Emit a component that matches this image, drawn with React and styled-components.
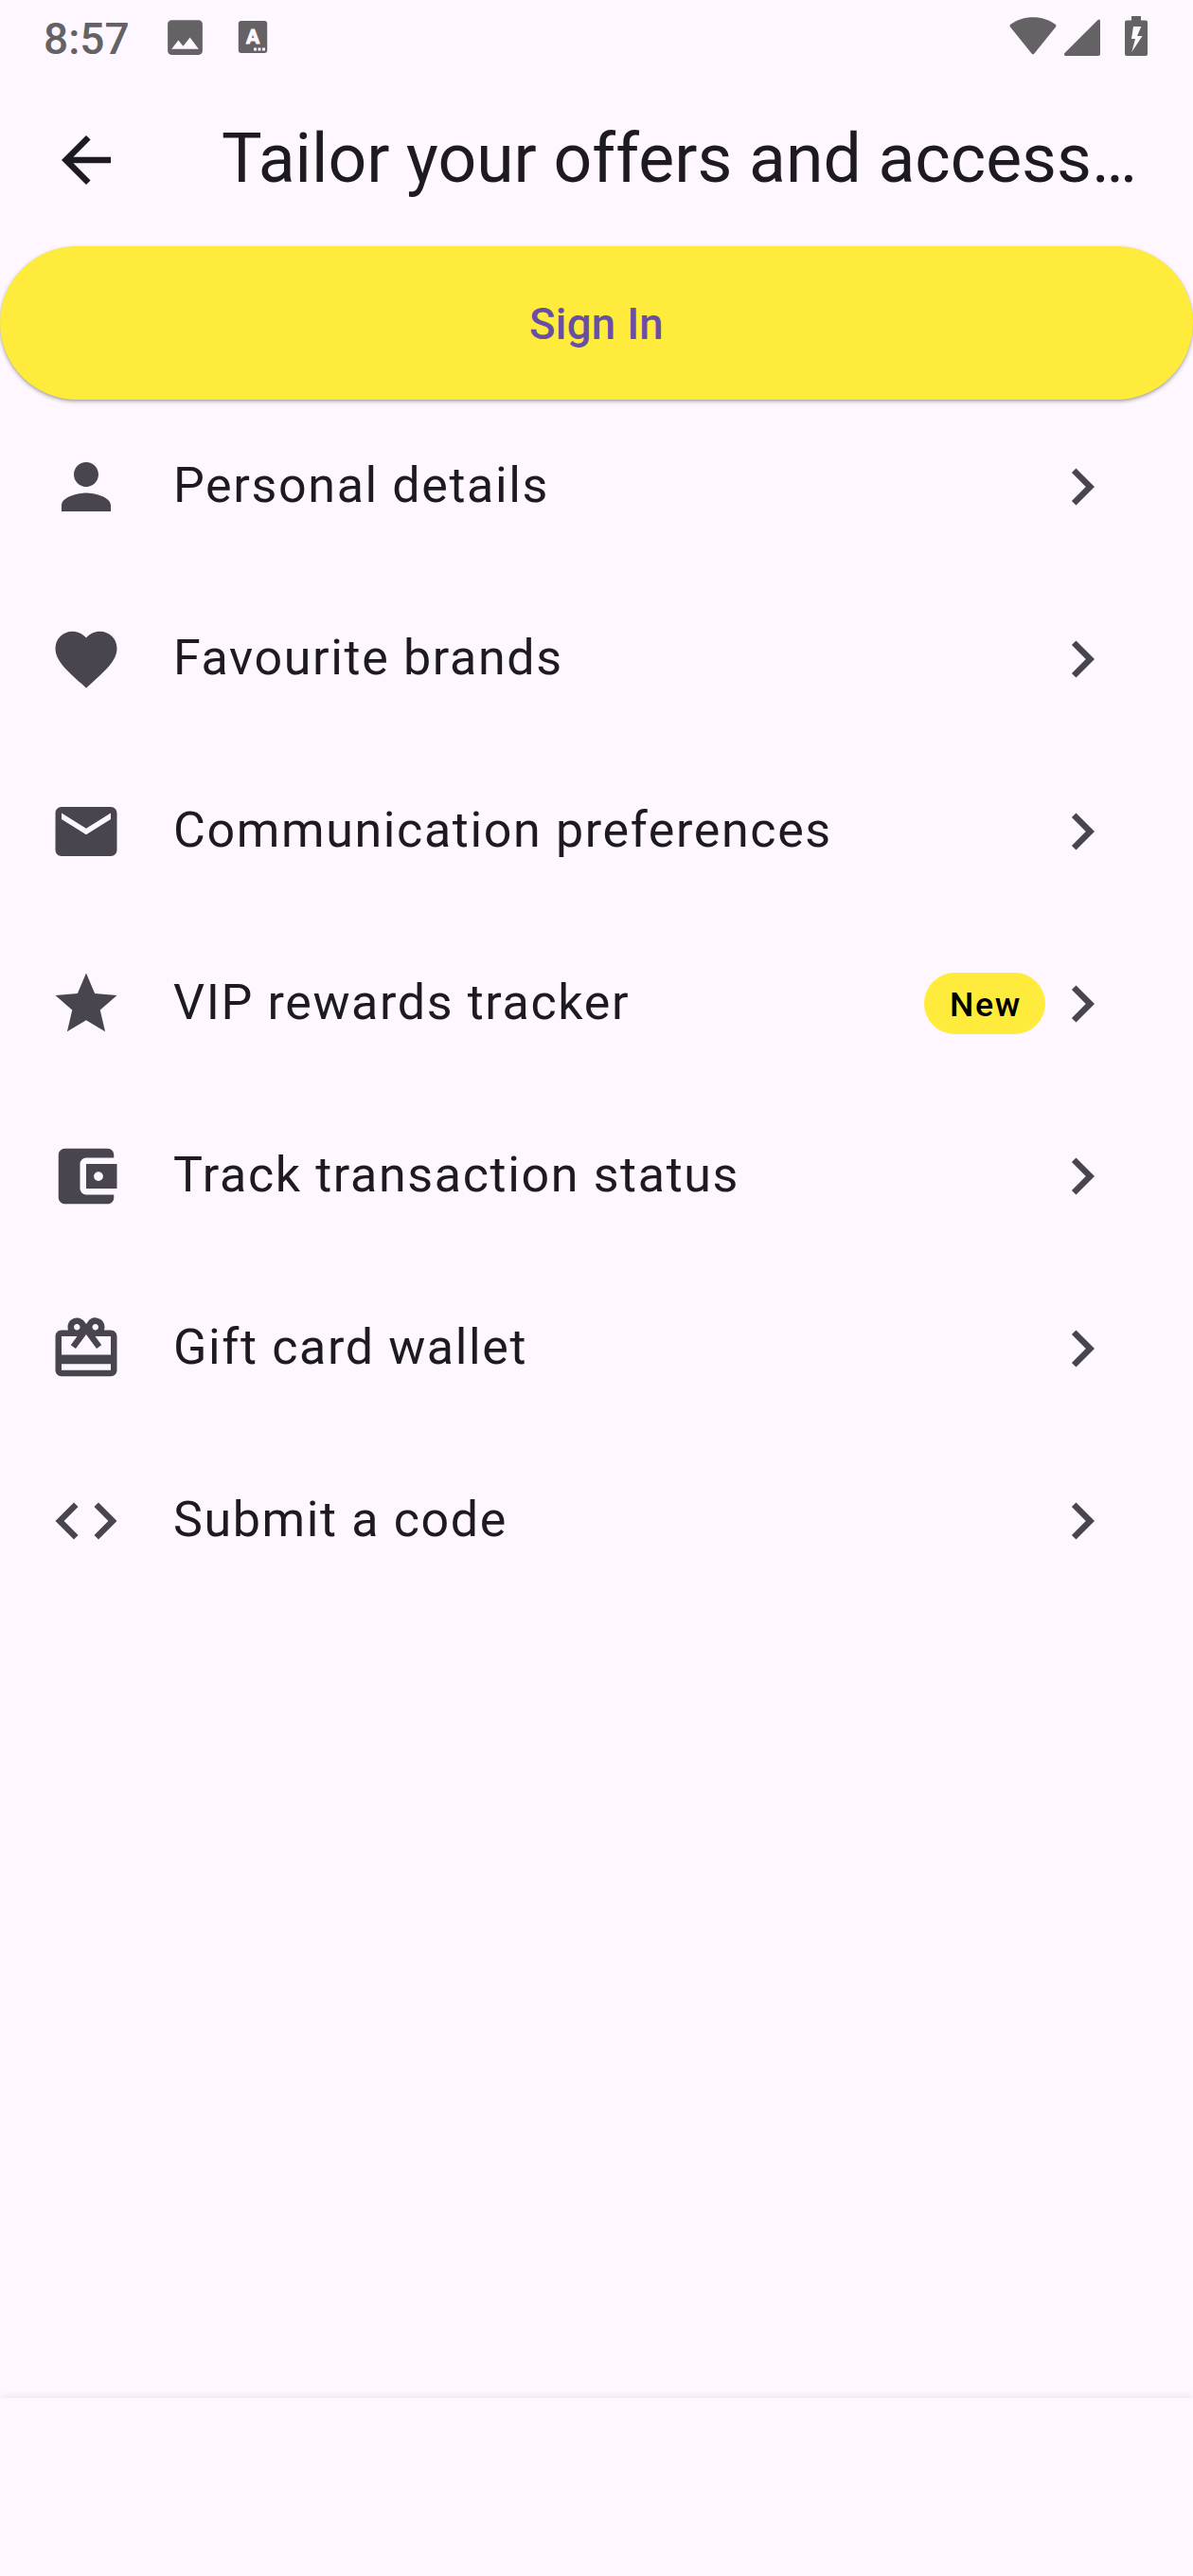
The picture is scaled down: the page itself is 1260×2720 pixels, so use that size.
import React from "react";
import styled, { createGlobalStyle } from "styled-components";
import {
  MdAccountBalanceWallet,
  MdArrowBack,
  MdChevronRight,
  MdCode,
  MdEmail,
  MdFavorite,
  MdImage,
  MdPerson,
  MdRedeem,
  MdStar,
} from "react-icons/md";

const GlobalStyle = createGlobalStyle`
  * { box-sizing: border-box; }
  body {
    margin: 0;
    background: #fef7ff;
    font-family: Roboto, "Noto Sans", sans-serif;
    color: #1d1b20;
  }
`;

const Screen = styled.div`
  display: flex;
  flex-direction: column;
  width: 1260px;
  height: 2720px;
  overflow: hidden;
  background: #fef7ff;
`;

const StatusBar = styled.header`
  display: flex;
  align-items: flex-start;
  justify-content: space-between;
  height: 78px;
  padding: 0 48px 0 46px;
  color: #656266;
`;

const StatusGroup = styled.div`
  display: flex;
  align-items: center;
  height: 78px;
`;

const Clock = styled.span`
  width: 124.5px;
  font-size: 46px;
  line-height: 78px;
  font-weight: 500;
  padding-top: 3px;
`;

const StatusGlyph = styled.svg`
  display: block;
  margin-left: ${(p) => p.$gap || 0}px;
  fill: currentColor;
`;

const AppBar = styled.div`
  display: flex;
  align-items: center;
  height: 182px;
  padding: 0 52px;
`;

const BackButton = styled.button`
  display: flex;
  flex: none;
  width: 182px;
  padding: 0;
  border: 0;
  background: none;
  color: #1d1b20;
  font-size: 78px;
`;

const Title = styled.h1`
  margin: 0;
  padding-bottom: 4px;
  font-size: 71.5px;
  line-height: 91px;
  font-weight: 400;
  white-space: nowrap;
`;

const SignIn = styled.button`
  flex: none;
  height: 162px;
  margin-bottom: 0.5px;
  padding: 3px 0 0;
  border: 0;
  border-radius: 81px;
  background: #ffeb3b;
  color: #6750a4;
  font-family: inherit;
  font-size: 45.5px;
  font-weight: 500;
  letter-spacing: 0.325px;
  box-shadow: 0 2px 4px rgba(0, 0, 0, 0.3), 0 1px 2px rgba(0, 0, 0, 0.1);
`;

const Menu = styled.ul`
  flex: 1;
  margin: 0;
  padding: 0;
  list-style: none;
`;

const MenuRow = styled.li`
  display: flex;
  align-items: center;
  height: 182px;
  padding: 0 78px 0 52px;
  color: #49454f;
  font-size: 78px;

  svg {
    flex: none;
  }
`;

const Label = styled.span`
  flex: 1;
  padding: 0 0 1px 53px;
  color: #1d1b20;
  font-size: 52px;
  line-height: 78px;
  letter-spacing: 1.625px;
`;

const Badge = styled.span`
  height: 65px;
  padding: 0 25px 0 27px;
  border-radius: 33px;
  background: #ffeb3b;
  color: #000;
  font-size: 35.75px;
  line-height: 68px;
  font-weight: 500;
  letter-spacing: 1.625px;
`;

const BottomBar = styled.footer`
  height: 188px;
  background: #fef7ff;
  box-shadow: 0 -3px 7px rgba(40, 20, 50, 0.06);
`;

const items = [
  { label: "Personal details", Icon: MdPerson },
  { label: "Favourite brands", Icon: MdFavorite },
  { label: "Communication preferences", Icon: MdEmail },
  { label: "VIP rewards tracker", Icon: MdStar, badge: "New" },
  { label: "Track transaction status", Icon: MdAccountBalanceWallet },
  { label: "Gift card wallet", Icon: MdRedeem },
  { label: "Submit a code", Icon: MdCode },
];

function KeyboardGlyph() {
  return (
    <StatusGlyph $gap={31} width="32" height="36" viewBox="0 0 32 36">
      <rect x="0.8" y="1" width="30.4" height="34" rx="3" />
      <text
        x="16"
        y="25"
        textAnchor="middle"
        fontFamily="Roboto, sans-serif"
        fontSize="21"
        fontWeight="700"
        fill="#fef7ff"
        stroke="#fef7ff"
        strokeWidth="1"
        strokeLinejoin="round"
      >
        A
      </text>
      <g fill="#fef7ff">
        <rect x="17" y="29.5" width="3" height="3" />
        <rect x="21.5" y="29.5" width="3" height="3" />
        <rect x="26" y="29.5" width="3" height="3" />
      </g>
    </StatusGlyph>
  );
}

export default function App() {
  return (
    <Screen>
      <GlobalStyle />
      <StatusBar>
        <StatusGroup>
          <Clock>8:57</Clock>
          <MdImage size={49} />
          <KeyboardGlyph />
        </StatusGroup>
        <StatusGroup>
          <StatusGlyph width="50" height="78" viewBox="0 0 50 78">
            <path d="M1.2 28.8Q-0.2 27 1.6 25.5C8 20.8 16 18.2 25 18.2S42 20.8 48.4 25.5Q50.2 27 48.8 28.8L26.4 56.5Q25 58.2 23.6 56.5Z" />
          </StatusGlyph>
          <StatusGlyph $gap={8} width="38" height="78" viewBox="0 0 38 78">
            <path d="M34.8 21.7Q38 19.2 38 22.5V57Q38 59 36 59H2Q-1.4 59 0.5 56Z" />
          </StatusGlyph>
          <StatusGlyph $gap={26} width="24" height="78" viewBox="0 0 24 78">
            <path
              fillRule="evenodd"
              d="M7 17H17V21.5H22Q24 21.5 24 23.5V57Q24 59 22 59H2Q0 59 0 57V23.5Q0 21.5 2 21.5H7ZM9 28L7 41H11L7.3 55L18.5 38H13L17.3 28Z"
            />
          </StatusGlyph>
        </StatusGroup>
      </StatusBar>
      <AppBar>
        <BackButton aria-label="Back">
          <MdArrowBack />
        </BackButton>
        <Title>Tailor your offers and access…</Title>
      </AppBar>
      <SignIn>Sign In</SignIn>
      <Menu>
        {items.map(({ label, Icon, badge }) => (
          <MenuRow key={label}>
            <Icon />
            <Label>{label}</Label>
            {badge && <Badge>{badge}</Badge>}
            <MdChevronRight />
          </MenuRow>
        ))}
      </Menu>
      <BottomBar />
    </Screen>
  );
}
